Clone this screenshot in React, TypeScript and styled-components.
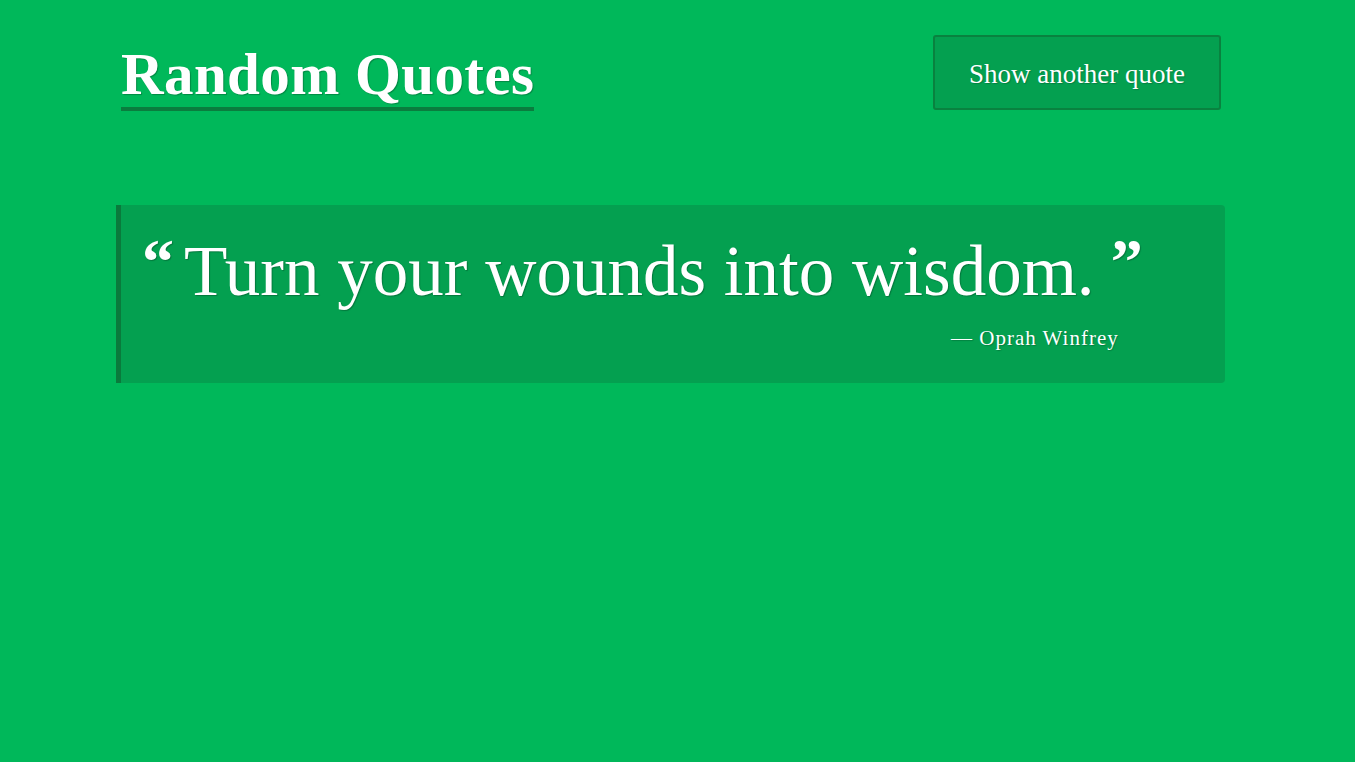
import React from "react";
import styled, { createGlobalStyle } from "styled-components";

const Global = createGlobalStyle`
  html, body { margin: 0; padding: 0; background: #00b85a; }
  body { font-family: "Liberation Serif", "DejaVu Serif", serif; color: #fff; }
`;

const Page = styled.div`
  min-height: 762px;
  background: #00b85a;
  padding-top: 35px;
  box-sizing: border-box;
`;

const Container = styled.div`
  width: 1109px;
  margin-left: 116px;
  display: flex;
  flex-direction: column;
  gap: 94px;
`;

const Header = styled.header`
  display: flex;
  justify-content: space-between;
  align-items: flex-start;
  height: 76px;
  padding: 0 4px 0 5px;
`;

const Title = styled.h1`
  margin: 0;
  font-family: "Liberation Serif", serif;
  font-weight: 700;
  font-size: 59px;
  line-height: 66px;
  padding-top: 6px;
  border-bottom: 4px solid #0a7d3e;
  text-shadow: 1px 1px 1px rgba(0, 0, 0, 0.25);
  letter-spacing: 0.4px;
`;

const Button = styled.button`
  width: 288px;
  height: 75px;
  margin-top: 0;
  background: #04a050;
  border: 2px solid #09823f;
  border-radius: 3px;
  color: #fff;
  font-family: "Liberation Serif", serif;
  font-size: 27px;
  padding: 4px 0 0;
  text-shadow: 1px 1px 1px rgba(0, 0, 0, 0.2);
  cursor: pointer;
`;

const QuoteBox = styled.blockquote`
  margin: 0;
  background: #04a050;
  border-left: 5px solid #0a7a3c;
  border-radius: 0 4px 4px 0;
  height: 178px;
  box-sizing: border-box;
  padding: 17px 0 0 21px;
  display: flex;
  flex-direction: column;
`;

const QuoteText = styled.p`
  margin: 0;
  font-size: 71px;
  line-height: 80px;
  text-shadow: 1px 1px 1px rgba(0, 0, 0, 0.25);
  white-space: nowrap;
`;

const Mark = styled.span<{ $open?: boolean }>`
  font-family: "Liberation Serif", serif;
  font-weight: 700;
  font-size: 64px;
  vertical-align: 12px;
  margin: ${(p) => (p.$open ? "0 10px 0 0" : "0 0 0 16px")};
`;

const Author = styled.cite`
  align-self: flex-start;
  margin-left: 809px;
  margin-top: 15px;
  font-style: normal;
  font-size: 21px;
  letter-spacing: 1px;
  text-shadow: 1px 1px 1px rgba(0, 0, 0, 0.2);
`;

export default function App() {
  return (
    <Page>
      <Global />
      <Container>
        <Header>
          <Title>Random Quotes</Title>
          <Button>Show another quote</Button>
        </Header>
        <QuoteBox>
          <QuoteText>
            <Mark $open>“</Mark>Turn your wounds into wisdom.<Mark>”</Mark>
          </QuoteText>
          <Author>— Oprah Winfrey</Author>
        </QuoteBox>
      </Container>
    </Page>
  );
}
